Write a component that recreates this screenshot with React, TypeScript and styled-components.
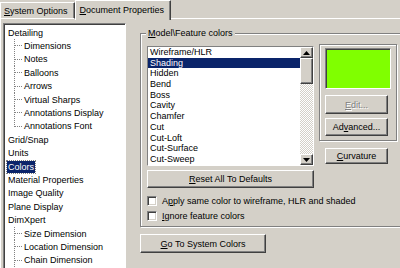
import React, { FC } from 'react';
import styled, { createGlobalStyle } from 'styled-components';

const GlobalStyle = createGlobalStyle`
  html, body {
    margin: 0;
    padding: 0;
    background: #d4d0c8;
  }
`;

interface ITreeItem {
  label: string;
  child?: boolean;
  last?: boolean;
  selected?: boolean;
}

const TREE: ITreeItem[] = [
  { label: 'Detailing' },
  { label: 'Dimensions', child: true },
  { label: 'Notes', child: true },
  { label: 'Balloons', child: true },
  { label: 'Arrows', child: true },
  { label: 'Virtual Sharps', child: true },
  { label: 'Annotations Display', child: true },
  { label: 'Annotations Font', child: true, last: true },
  { label: 'Grid/Snap' },
  { label: 'Units' },
  { label: 'Colors', selected: true },
  { label: 'Material Properties' },
  { label: 'Image Quality' },
  { label: 'Plane Display' },
  { label: 'DimXpert' },
  { label: 'Size Dimension', child: true },
  { label: 'Location Dimension', child: true },
  { label: 'Chain Dimension', child: true }
];

const FEATURES = [
  'Wireframe/HLR',
  'Shading',
  'Hidden',
  'Bend',
  'Boss',
  'Cavity',
  'Chamfer',
  'Cut',
  'Cut-Loft',
  'Cut-Surface',
  'Cut-Sweep'
];

const Branch: FC<{ last?: boolean }> = ({ last }) => (
  <SBranch width="15" height="13.4" viewBox="0 0 15 13.4">
    <line
      x1="6.5"
      y1="0"
      x2="6.5"
      y2={last ? 7 : 13.4}
      stroke="#808080"
      strokeDasharray="1 1"
    />
    <line x1="7" y1="6.5" x2="14" y2="6.5" stroke="#808080" strokeDasharray="1 1" />
  </SBranch>
);

const Arrow: FC<{ down?: boolean }> = ({ down }) => (
  <svg width="7" height="4" viewBox="0 0 7 4">
    <polygon points={down ? '0,0 7,0 3.5,4' : '0,4 7,4 3.5,0'} fill="#000" />
  </svg>
);

const App: FC = () => {
  return (
    <SWindow>
      <GlobalStyle />
      <STabStrip>
        <STab>
          <SKey>S</SKey>ystem Options
        </STab>
        <STab $active>
          <SKey>D</SKey>ocument Properties
        </STab>
        <STabFill />
      </STabStrip>

      <SBody>
        <STree>
          {TREE.map((item) => (
            <STreeRow key={item.label}>
              {item.child && <Branch last={item.last} />}
              <STreeLabel $selected={item.selected}>{item.label}</STreeLabel>
            </STreeRow>
          ))}
        </STree>

        <SPane>
          <SGroup>
            <SLegend>
              <SKey>M</SKey>odel\Feature colors
            </SLegend>

            <STopRow>
              <SListColumn>
                <SListBox>
                  <SListItems>
                    {FEATURES.map((name) => (
                      <SListItem key={name} $selected={name === 'Shading'}>
                        {name}
                      </SListItem>
                    ))}
                  </SListItems>
                  <SScrollBar>
                    <SScrollArrow>
                      <Arrow />
                    </SScrollArrow>
                    <SThumb />
                    <STrack />
                    <SScrollArrow>
                      <Arrow down />
                    </SScrollArrow>
                  </SScrollBar>
                </SListBox>
                <SButton $width={167} $height={18}>
                  <SKey>R</SKey>eset All To Defaults
                </SButton>
              </SListColumn>

              <SSideColumn>
                <SColorFrame>
                  <SSwatch $color="#80ff00" />
                  <SButton $width={63} $height={19} $disabled>
                    <SKey>E</SKey>dit...
                  </SButton>
                  <SButton $width={63} $height={18}>
                    Ad<SKey>v</SKey>anced...
                  </SButton>
                </SColorFrame>
                <SCurvature>
                  <SButton $width={63} $height={16}>
                    <SKey>C</SKey>urvature
                  </SButton>
                </SCurvature>
              </SSideColumn>
            </STopRow>

            <SChecks>
              <SCheckRow>
                <SCheckBox />
                <span>
                  A<SKey>p</SKey>ply same color to wireframe, HLR and shaded
                </span>
              </SCheckRow>
              <SCheckRow>
                <SCheckBox />
                <span>
                  <SKey>I</SKey>gnore feature colors
                </span>
              </SCheckRow>
            </SChecks>
          </SGroup>

          <SSystemRow>
            <SButton $width={126} $height={19}>
              <SKey>G</SKey>o To System Colors
            </SButton>
          </SSystemRow>
        </SPane>
      </SBody>
    </SWindow>
  );
};

export default App;

const SWindow = styled.div`
  width: 400px;
  height: 268px;
  overflow: hidden;
  display: flex;
  flex-direction: column;
  background: #d4d0c8;
  color: #000;
  font-family: 'Liberation Sans', Arial, sans-serif;
  font-size: 9px;
`;

const SKey = styled.span`
  text-decoration: underline;
`;

/* tabs */

const STabStrip = styled.div`
  display: flex;
  align-items: flex-end;
  height: 19px;
  flex-shrink: 0;
`;

const STab = styled.div<{ $active?: boolean }>`
  box-sizing: border-box;
  height: ${({ $active }) => ($active ? '20px' : '17px')};
  margin-bottom: ${({ $active }) => ($active ? '-1px' : '0')};
  padding: ${({ $active }) => ($active ? '3px 6px 0 4px' : '2px 6px 0 3px')};
  border-top: 1px solid #fff;
  border-left: 1px solid #fff;
  border-right: 1px solid #404040;
  border-bottom: ${({ $active }) => ($active ? 'none' : '1px solid #fff')};
  box-shadow: inset -1px 0 0 #808080;
  background: #d4d0c8;
  white-space: nowrap;
  line-height: 12px;
  position: relative;
  z-index: ${({ $active }) => ($active ? 1 : 0)};
`;

const STabFill = styled.div`
  flex: 1;
  height: 1px;
  background: #fff;
`;

/* body */

const SBody = styled.div`
  flex: 1;
  min-height: 0;
  display: flex;
  padding-top: 4px;
  border-left: 1px solid #fff;
`;

const STree = styled.div`
  box-sizing: border-box;
  width: 123px;
  margin-left: 2px;
  flex-shrink: 0;
  background: #fff;
  border-top: 1px solid #808080;
  border-left: 1px solid #808080;
  border-right: 1px solid #fff;
  box-shadow: inset 1px 1px 0 #404040;
  padding: 2px 0 0 3px;
`;

const STreeRow = styled.div`
  display: flex;
  align-items: center;
  height: 13.4px;
  white-space: nowrap;
`;

const SBranch = styled.svg`
  display: block;
  flex-shrink: 0;
  margin-left: 1px;
`;

const STreeLabel = styled.span<{ $selected?: boolean }>`
  padding: 0 1px;
  line-height: 12px;
  background: ${({ $selected }) => ($selected ? '#0a246a' : 'transparent')};
  color: ${({ $selected }) => ($selected ? '#fff' : '#000')};
  outline: ${({ $selected }) => ($selected ? '1px dotted #808080' : 'none')};
`;

/* right pane */

const SPane = styled.div`
  display: flex;
  flex-direction: column;
  padding-left: 14px;
`;

const SGroup = styled.fieldset`
  box-sizing: border-box;
  width: 270px;
  height: 199px;
  margin: 5px 0 0;
  padding: 7px 0 0 5px;
  border: 1px solid #808080;
  box-shadow: inset 1px 1px 0 #fff, 1px 1px 0 #fff;
  min-inline-size: 0;
`;

const SLegend = styled.legend`
  padding: 0 2px;
  line-height: 11px;
  background: #d4d0c8;
`;

const STopRow = styled.div`
  display: flex;
  align-items: flex-start;
`;

const SListColumn = styled.div`
  display: flex;
  flex-direction: column;
  gap: 4px;
  margin-left: 1px;
`;

const SListBox = styled.div`
  box-sizing: border-box;
  width: 167px;
  height: 120px;
  display: flex;
  background: #fff;
  border-top: 1px solid #808080;
  border-left: 1px solid #808080;
  border-right: 1px solid #fff;
  border-bottom: 1px solid #fff;
`;

const SListItems = styled.div`
  flex: 1;
  display: flex;
  flex-direction: column;
`;

const SListItem = styled.div<{ $selected?: boolean }>`
  height: 10.7px;
  line-height: 10.7px;
  padding-left: 2px;
  white-space: nowrap;
  background: ${({ $selected }) => ($selected ? '#0a246a' : 'transparent')};
  color: ${({ $selected }) => ($selected ? '#fff' : '#000')};
`;

const SScrollBar = styled.div`
  width: 13px;
  display: flex;
  flex-direction: column;
`;

const SRaised = styled.div`
  box-sizing: border-box;
  background: #d4d0c8;
  border: 1px solid;
  border-color: #fff #404040 #404040 #fff;
  box-shadow: inset -1px -1px 0 #808080;
`;

const SScrollArrow = styled(SRaised)`
  height: 11px;
  display: flex;
  align-items: center;
  justify-content: center;
`;

const SThumb = styled(SRaised)`
  height: 26px;
`;

const STrack = styled.div`
  flex: 1;
  background-color: #fff;
  background-image: repeating-conic-gradient(#d4d0c8 0 25%, #fff 0 50%);
  background-size: 2px 2px;
`;

const SButton = styled.div<{ $width: number; $height: number; $disabled?: boolean }>`
  box-sizing: border-box;
  width: ${({ $width }) => $width}px;
  height: ${({ $height }) => $height}px;
  display: flex;
  align-items: center;
  justify-content: center;
  background: #d4d0c8;
  border: 1px solid;
  border-color: #fff #404040 #404040 #fff;
  box-shadow: inset -1px -1px 0 #808080;
  white-space: nowrap;
  color: ${({ $disabled }) => ($disabled ? '#808080' : '#000')};
  text-shadow: ${({ $disabled }) => ($disabled ? '1px 1px 0 #fff' : 'none')};
`;

const SSideColumn = styled.div`
  display: flex;
  flex-direction: column;
  margin: -2px 0 0 5px;
`;

const SColorFrame = styled.div`
  box-sizing: border-box;
  width: 78px;
  height: 97px;
  display: flex;
  flex-direction: column;
  align-items: flex-start;
  gap: 4px;
  padding: 3px 0 0 5px;
  border: 1px solid #808080;
  box-shadow: inset 1px 1px 0 #fff, 1px 1px 0 #fff;
`;

const SSwatch = styled.div<{ $color: string }>`
  box-sizing: border-box;
  width: 66px;
  height: 41px;
  margin-bottom: 2px;
  background: ${({ $color }) => $color};
  border-top: 1px solid #808080;
  border-left: 1px solid #808080;
  border-right: 1px solid #fff;
  border-bottom: 1px solid #fff;
  box-shadow: inset 1px 1px 0 #404040;
`;

const SCurvature = styled.div`
  padding: 7px 0 0 6px;
`;

const SChecks = styled.div`
  display: flex;
  flex-direction: column;
  gap: 5px;
  margin: 8px 0 0 1px;
`;

const SCheckRow = styled.div`
  display: flex;
  align-items: center;
  gap: 5px;
  height: 10px;
  white-space: nowrap;
`;

const SCheckBox = styled.span`
  box-sizing: border-box;
  width: 10px;
  height: 10px;
  flex-shrink: 0;
  background: #fff;
  border-top: 1px solid #808080;
  border-left: 1px solid #808080;
  border-right: 1px solid #fff;
  border-bottom: 1px solid #fff;
  box-shadow: inset 1px 1px 0 #404040, inset -1px -1px 0 #d4d0c8;
`;

const SSystemRow = styled.div`
  padding-top: 7px;
`;
